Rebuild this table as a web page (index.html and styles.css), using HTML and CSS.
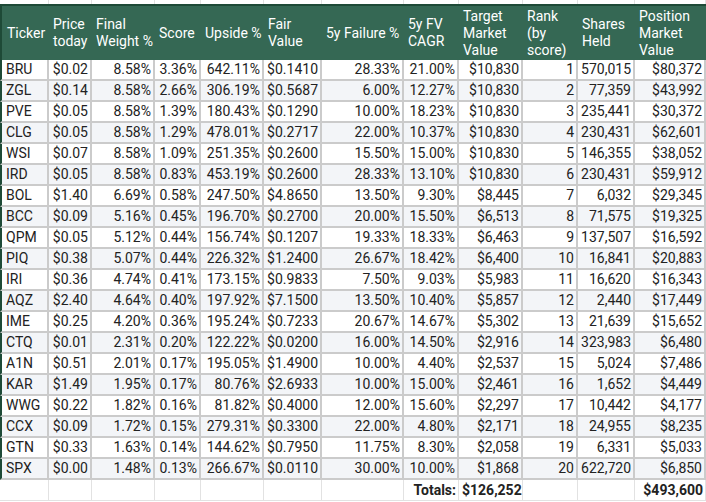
FILE: index.html
```html
<!DOCTYPE html>
<html>
<head>
<meta charset="utf-8">
<link rel="stylesheet" href="styles.css">
</head>
<body>
<div class="sheet">
  <div class="c strip"></div><div class="c strip"></div><div class="c strip"></div><div class="c strip"></div><div class="c strip"></div><div class="c strip"></div><div class="c strip"></div><div class="c strip"></div><div class="c strip"></div><div class="c strip"></div><div class="c strip"></div><div class="c strip"></div>

  <div class="c h first">Ticker</div>
  <div class="c h">Price today</div>
  <div class="c h">Final Weight %</div>
  <div class="c h">Score</div>
  <div class="c h">Upside %</div>
  <div class="c h">Fair Value</div>
  <div class="c h">5y Failure %</div>
  <div class="c h">5y FV CAGR</div>
  <div class="c h">Target Market Value</div>
  <div class="c h">Rank (by score)</div>
  <div class="c h">Shares Held</div>
  <div class="c h">Position Market Value</div>

  <div class="c d first l">BRU</div><div class="c d">$0.02</div><div class="c d">8.58%</div><div class="c d">3.36%</div><div class="c d">642.11%</div><div class="c d">$0.1410</div><div class="c d">28.33%</div><div class="c d">21.00%</div><div class="c d">$10,830</div><div class="c d">1</div><div class="c d">570,015</div><div class="c d">$80,372</div>
  <div class="c d alt first l">ZGL</div><div class="c d alt">$0.14</div><div class="c d alt">8.58%</div><div class="c d alt">2.66%</div><div class="c d alt">306.19%</div><div class="c d alt">$0.5687</div><div class="c d alt">6.00%</div><div class="c d alt">12.27%</div><div class="c d alt">$10,830</div><div class="c d alt">2</div><div class="c d alt">77,359</div><div class="c d alt">$43,992</div>
  <div class="c d first l">PVE</div><div class="c d">$0.05</div><div class="c d">8.58%</div><div class="c d">1.39%</div><div class="c d">180.43%</div><div class="c d">$0.1290</div><div class="c d">10.00%</div><div class="c d">18.23%</div><div class="c d">$10,830</div><div class="c d">3</div><div class="c d">235,441</div><div class="c d">$30,372</div>
  <div class="c d alt first l">CLG</div><div class="c d alt">$0.05</div><div class="c d alt">8.58%</div><div class="c d alt">1.29%</div><div class="c d alt">478.01%</div><div class="c d alt">$0.2717</div><div class="c d alt">22.00%</div><div class="c d alt">10.37%</div><div class="c d alt">$10,830</div><div class="c d alt">4</div><div class="c d alt">230,431</div><div class="c d alt">$62,601</div>
  <div class="c d first l">WSI</div><div class="c d">$0.07</div><div class="c d">8.58%</div><div class="c d">1.09%</div><div class="c d">251.35%</div><div class="c d">$0.2600</div><div class="c d">15.50%</div><div class="c d">15.00%</div><div class="c d">$10,830</div><div class="c d">5</div><div class="c d">146,355</div><div class="c d">$38,052</div>
  <div class="c d alt first l">IRD</div><div class="c d alt">$0.05</div><div class="c d alt">8.58%</div><div class="c d alt">0.83%</div><div class="c d alt">453.19%</div><div class="c d alt">$0.2600</div><div class="c d alt">28.33%</div><div class="c d alt">13.10%</div><div class="c d alt">$10,830</div><div class="c d alt">6</div><div class="c d alt">230,431</div><div class="c d alt">$59,912</div>
  <div class="c d first l">BOL</div><div class="c d">$1.40</div><div class="c d">6.69%</div><div class="c d">0.58%</div><div class="c d">247.50%</div><div class="c d">$4.8650</div><div class="c d">13.50%</div><div class="c d">9.30%</div><div class="c d">$8,445</div><div class="c d">7</div><div class="c d">6,032</div><div class="c d">$29,345</div>
  <div class="c d alt first l">BCC</div><div class="c d alt">$0.09</div><div class="c d alt">5.16%</div><div class="c d alt">0.45%</div><div class="c d alt">196.70%</div><div class="c d alt">$0.2700</div><div class="c d alt">20.00%</div><div class="c d alt">15.50%</div><div class="c d alt">$6,513</div><div class="c d alt">8</div><div class="c d alt">71,575</div><div class="c d alt">$19,325</div>
  <div class="c d first l">QPM</div><div class="c d">$0.05</div><div class="c d">5.12%</div><div class="c d">0.44%</div><div class="c d">156.74%</div><div class="c d">$0.1207</div><div class="c d">19.33%</div><div class="c d">18.33%</div><div class="c d">$6,463</div><div class="c d">9</div><div class="c d">137,507</div><div class="c d">$16,592</div>
  <div class="c d alt first l">PIQ</div><div class="c d alt">$0.38</div><div class="c d alt">5.07%</div><div class="c d alt">0.44%</div><div class="c d alt">226.32%</div><div class="c d alt">$1.2400</div><div class="c d alt">26.67%</div><div class="c d alt">18.42%</div><div class="c d alt">$6,400</div><div class="c d alt">10</div><div class="c d alt">16,841</div><div class="c d alt">$20,883</div>
  <div class="c d first l">IRI</div><div class="c d">$0.36</div><div class="c d">4.74%</div><div class="c d">0.41%</div><div class="c d">173.15%</div><div class="c d">$0.9833</div><div class="c d">7.50%</div><div class="c d">9.03%</div><div class="c d">$5,983</div><div class="c d">11</div><div class="c d">16,620</div><div class="c d">$16,343</div>
  <div class="c d alt first l">AQZ</div><div class="c d alt">$2.40</div><div class="c d alt">4.64%</div><div class="c d alt">0.40%</div><div class="c d alt">197.92%</div><div class="c d alt">$7.1500</div><div class="c d alt">13.50%</div><div class="c d alt">10.40%</div><div class="c d alt">$5,857</div><div class="c d alt">12</div><div class="c d alt">2,440</div><div class="c d alt">$17,449</div>
  <div class="c d first l">IME</div><div class="c d">$0.25</div><div class="c d">4.20%</div><div class="c d">0.36%</div><div class="c d">195.24%</div><div class="c d">$0.7233</div><div class="c d">20.67%</div><div class="c d">14.67%</div><div class="c d">$5,302</div><div class="c d">13</div><div class="c d">21,639</div><div class="c d">$15,652</div>
  <div class="c d alt first l">CTQ</div><div class="c d alt">$0.01</div><div class="c d alt">2.31%</div><div class="c d alt">0.20%</div><div class="c d alt">122.22%</div><div class="c d alt">$0.0200</div><div class="c d alt">16.00%</div><div class="c d alt">14.50%</div><div class="c d alt">$2,916</div><div class="c d alt">14</div><div class="c d alt">323,983</div><div class="c d alt">$6,480</div>
  <div class="c d first l">A1N</div><div class="c d">$0.51</div><div class="c d">2.01%</div><div class="c d">0.17%</div><div class="c d">195.05%</div><div class="c d">$1.4900</div><div class="c d">10.00%</div><div class="c d">4.40%</div><div class="c d">$2,537</div><div class="c d">15</div><div class="c d">5,024</div><div class="c d">$7,486</div>
  <div class="c d alt first l">KAR</div><div class="c d alt">$1.49</div><div class="c d alt">1.95%</div><div class="c d alt">0.17%</div><div class="c d alt">80.76%</div><div class="c d alt">$2.6933</div><div class="c d alt">10.00%</div><div class="c d alt">15.00%</div><div class="c d alt">$2,461</div><div class="c d alt">16</div><div class="c d alt">1,652</div><div class="c d alt">$4,449</div>
  <div class="c d first l">WWG</div><div class="c d">$0.22</div><div class="c d">1.82%</div><div class="c d">0.16%</div><div class="c d">81.82%</div><div class="c d">$0.4000</div><div class="c d">12.00%</div><div class="c d">15.60%</div><div class="c d">$2,297</div><div class="c d">17</div><div class="c d">10,442</div><div class="c d">$4,177</div>
  <div class="c d alt first l">CCX</div><div class="c d alt">$0.09</div><div class="c d alt">1.72%</div><div class="c d alt">0.15%</div><div class="c d alt">279.31%</div><div class="c d alt">$0.3300</div><div class="c d alt">22.00%</div><div class="c d alt">4.80%</div><div class="c d alt">$2,171</div><div class="c d alt">18</div><div class="c d alt">24,955</div><div class="c d alt">$8,235</div>
  <div class="c d first l">GTN</div><div class="c d">$0.33</div><div class="c d">1.63%</div><div class="c d">0.14%</div><div class="c d">144.62%</div><div class="c d">$0.7950</div><div class="c d">11.75%</div><div class="c d">8.30%</div><div class="c d">$2,058</div><div class="c d">19</div><div class="c d">6,331</div><div class="c d">$5,033</div>
  <div class="c d alt first l">SPX</div><div class="c d alt">$0.00</div><div class="c d alt">1.48%</div><div class="c d alt">0.13%</div><div class="c d alt">266.67%</div><div class="c d alt">$0.0110</div><div class="c d alt">30.00%</div><div class="c d alt">10.00%</div><div class="c d alt">$1,868</div><div class="c d alt">20</div><div class="c d alt">622,720</div><div class="c d alt">$6,850</div>

  <div class="c t"></div><div class="c t"></div><div class="c t"></div><div class="c t"></div><div class="c t"></div><div class="c t"></div><div class="c t"></div><div class="c t b">Totals:</div><div class="c t b">$126,252</div><div class="c t"></div><div class="c t"></div><div class="c t b">$493,600</div>
</div>
</body>
</html>
```
FILE: styles.css
```css
html, body {
  margin: 0;
  padding: 0;
  background: #ffffff;
}
.sheet {
  display: grid;
  grid-template-columns: 49px 43px 63px 46px 63px 58px 82px 55px 64px 55px 57px 71px;
  width: 706px;
  font-family: Roboto, "Liberation Sans", sans-serif;
  font-size: 14px;
  color: #222222;
}
.c {
  box-sizing: border-box;
  white-space: nowrap;
  overflow: hidden;
}
.strip {
  height: 4px;
  border-right: 1px solid #e2e2e2;
}
.h {
  height: 56px;
  background: #356854;
  border-top: 2px solid #1e4a37;
  color: #ffffff;
  white-space: normal;
  line-height: 17px;
  padding: 0 2px 0 4px;
  display: flex;
  align-items: center;
}
.h.first {
  border-left: 2px solid #1e4a37;
  padding-left: 5px;
}
.d {
  height: 21px;
  line-height: 19px;
  border-right: 2px solid #cbcbcb;
  border-bottom: 2px solid #cbcbcb;
  text-align: right;
  padding: 0 2px 0 3px;
  background: #ffffff;
}
.d.alt {
  background: #f3f5f8;
}
.d.first {
  border-left: 2px solid #1e4a37;
}
.d.l {
  text-align: left;
  padding-left: 4px;
}
.t {
  height: 21px;
  line-height: 20px;
  border-right: 1px solid #e2e2e2;
  border-bottom: 1px solid #e2e2e2;
  text-align: right;
  padding: 0 2px 0 3px;
}
.t.b {
  font-weight: 700;
}
```
